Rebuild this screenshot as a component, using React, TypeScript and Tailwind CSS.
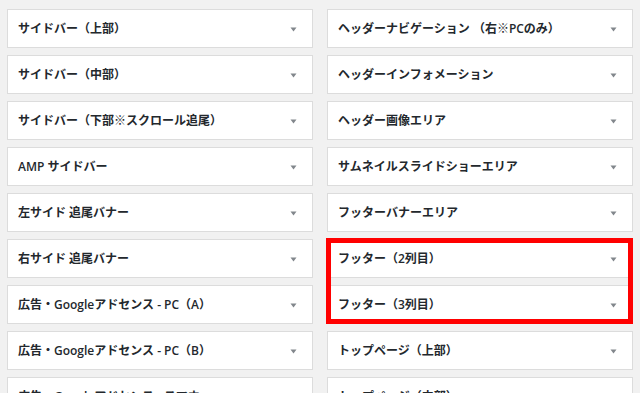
import React from "react";

const left = [
  "サイドバー（上部）",
  "サイドバー（中部）",
  "サイドバー（下部※スクロール追尾）",
  "AMP サイドバー",
  "左サイド 追尾バナー",
  "右サイド 追尾バナー",
  "広告・Googleアドセンス - PC（A）",
  "広告・Googleアドセンス - PC（B）",
  "広告・Googleアドセンス - スマホ",
];

const right = [
  "ヘッダーナビゲーション （右※PCのみ）",
  "ヘッダーインフォメーション",
  "ヘッダー画像エリア",
  "サムネイルスライドショーエリア",
  "フッターバナーエリア",
  "フッター（2列目）",
  "フッター（3列目）",
  "トップページ（上部）",
  "トップページ（中部）",
];

function Arrow() {
  return (
    <svg width="7" height="5" viewBox="0 0 7 5" className="shrink-0">
      <path d="M0.5 0.5 L6.5 0.5 L3.5 4.5 Z" fill="#82878c" />
    </svg>
  );
}

function Item({ label }: { label: string }) {
  return (
    <div className="h-[39px] bg-white border border-[#dcdcdc] flex items-center justify-between pl-[10px] pr-[15px] pt-px shrink-0">
      <span className="text-[12px] font-semibold text-[#23282d] whitespace-nowrap leading-none">
        {label}
      </span>
      <Arrow />
    </div>
  );
}

export default function App() {
  return (
    <div
      className="w-[640px] h-[393px] overflow-hidden bg-[#f1f1f1] flex gap-[14px] px-[7px] pt-[9px]"
      style={{ fontFamily: '"Open Sans", "Noto Sans CJK JP", sans-serif' }}
    >
      <div className="w-[306px] flex flex-col gap-[7px]">
        {left.map((l) => (
          <Item key={l} label={l} />
        ))}
      </div>
      <div className="w-[306px] flex flex-col gap-[7px]">
        {right.slice(0, 5).map((l) => (
          <Item key={l} label={l} />
        ))}
        <div className="relative flex flex-col gap-[7px]">
          <Item label={right[5]} />
          <Item label={right[6]} />
          <div className="absolute -left-px -top-px right-0 bottom-0 border-[5px] border-[#ff0000] pointer-events-none" />
        </div>
        {right.slice(7).map((l) => (
          <Item key={l} label={l} />
        ))}
      </div>
    </div>
  );
}
